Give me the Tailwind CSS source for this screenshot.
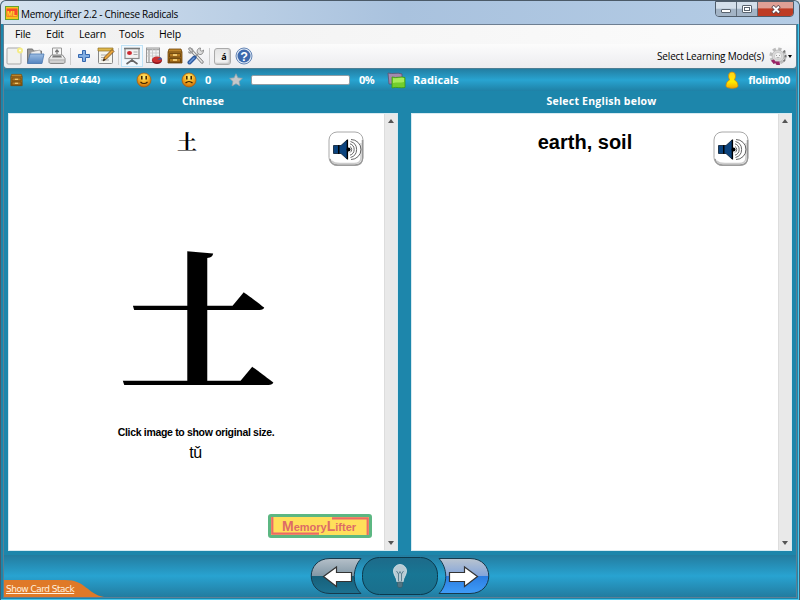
<!DOCTYPE html>
<html lang="en">
<head>
<meta charset="utf-8">
<title>MemoryLifter 2.2 - Chinese Radicals</title>
<script src="https://cdn.jsdelivr.net/npm/@tailwindcss/browser@4"></script>
</head>
<body class="w-[800px] h-[600px] overflow-hidden bg-[#dfe6ee] font-['Open_Sans','Noto_Sans',sans-serif] text-black">
<svg width="0" height="0" class="absolute">
<defs>
<linearGradient id="wood" x2="0" y2="1"><stop stop-color="#c48a2c"/><stop offset="1" stop-color="#8a5710"/></linearGradient>
<radialGradient id="face" cx=".5" cy=".3" r=".7"><stop stop-color="#fff27a"/><stop offset=".5" stop-color="#f5b024"/><stop offset="1" stop-color="#c96a08"/></radialGradient>
<linearGradient id="gray" x2="0" y2="1"><stop stop-color="#fff"/><stop offset="1" stop-color="#c4c4c4"/></linearGradient>
<linearGradient id="btnL" x2="0" y2="1"><stop stop-color="#b5c0c9"/><stop offset=".49" stop-color="#8298a6"/><stop offset=".5" stop-color="#17607a"/><stop offset="1" stop-color="#1c7190"/></linearGradient>
<linearGradient id="btnR" x2="0" y2="1"><stop stop-color="#bac4cf"/><stop offset=".49" stop-color="#84a5da"/><stop offset=".5" stop-color="#2b7ce0"/><stop offset="1" stop-color="#3f9cf8"/></linearGradient>
<linearGradient id="btnM" x2="0" y2="1"><stop stop-color="#1d6a89"/><stop offset=".45" stop-color="#187694"/><stop offset="1" stop-color="#1a6f8c"/></linearGradient>
<linearGradient id="gold" x2="0" y2="1"><stop stop-color="#ffd21a"/><stop offset=".6" stop-color="#ffee00"/><stop offset="1" stop-color="#f5a800"/></linearGradient>
<linearGradient id="fold" x2="0" y2="1"><stop stop-color="#9dbde2"/><stop offset="1" stop-color="#5484c0"/></linearGradient>
<symbol id="drawer" viewBox="0 0 16 16"><path d="M2 1h12l1 3v11H1V4z" fill="url(#wood)" stroke="#70450a" stroke-width=".8"/><path d="M1 4h14M2.500 5.500h11v3.500h-11zM2.500 10.500h11V14h-11z" fill="#b47a20" stroke="#65400c" stroke-width=".8"/><path d="M6 7h4M6 12h4" stroke="#ffe08a" stroke-width="1.300"/></symbol>
<symbol id="speaker" viewBox="0 0 36 36"><rect x="1" y="1" width="34" height="33.500" rx="8" fill="#fff" stroke="#a8a8a8"/><path d="M2 28c1 4.500 3 6 8 6h17c5 0 7.500-2 7.500-7V9" fill="none" stroke="#999" stroke-width="1.500"/><path d="M4 30c2 2.500 4 2.500 8 2.500h14c5 0 7-2 7-6V12" fill="none" stroke="#ccc" stroke-width="1.500"/><path d="M5.500 14.500h5v8h-5zM11 14.500h2l6-5.500v19l-6-5.500h-2z" fill="#0b437e" stroke="#061a30" stroke-width=".8"/><path d="M10.700 14v9M19.500 8.500v20" stroke="#000" stroke-width="1.200"/><circle cx="20.500" cy="18.500" r="2" fill="#000"/><path d="M22 15.500a3.500 3.500 0 0 1 0 6M22 12.800a6 6 0 0 1 0 11.400M22.500 10.500a8.300 8.300 0 0 1 0 16M23 8.500a10 10 0 0 1 0 20" fill="none" stroke="#555" stroke-width=".9"/></symbol>
</defs>
</svg>
<div class="w-[800px] h-[600px] flex flex-col rounded-t-md border-x border-t border-[#4b5a68] bg-[#1d86ab] relative overflow-hidden shadow-[inset_-1px_-1px_0_#49c8ee]">
  <header class="h-[23px] shrink-0 flex items-center bg-linear-to-r from-[#d5e2ef] via-[#a9c2de] to-[#b4cce5] pl-1 pt-[2px]">
    <svg class="w-[14px] h-[14px] mr-[2px] -mt-px" viewBox="0 0 14 14"><rect x=".5" y=".5" width="13" height="13" fill="#f5c51c" stroke="#62a232"/><rect x="1.500" y="2.500" width="11" height="8" fill="#f6492c"/><text x="2" y="9.500" font-size="7.500" font-weight="bold" fill="#ffe52c" font-family="Liberation Sans" textLength="10" lengthAdjust="spacingAndGlyphs">ML</text></svg>
    <span class="text-[10px] tracking-[-0.260px] whitespace-nowrap mt-[2px]">MemoryLifter 2.2 - Chinese Radicals</span>
    <div class="ml-auto mr-[5px] self-start -mt-[2px] flex h-[16px] w-[79px] rounded-b-[4px] border border-[#4f5d6b] overflow-hidden">
      <div class="w-[21px] border-r border-[#5f6d7b] bg-linear-to-b from-[#d4dfea] from-45% to-[#a3b4c6] to-50% flex justify-center items-end pb-[3px]"><div class="w-[10px] h-[4px] bg-white border border-[#59636e] rounded-[1px]"></div></div>
      <div class="w-[21px] border-r border-[#5f6d7b] bg-linear-to-b from-[#d4dfea] from-45% to-[#a3b4c6] to-50% flex justify-center items-center"><div class="w-[10px] h-[8px] bg-white border border-[#59636e] rounded-[1px] p-[1px]"><div class="w-full h-full border border-[#59636e]"></div></div></div>
      <div class="flex-1 bg-linear-to-b from-[#dfa095] from-40% to-[#bd3c25] to-50% flex justify-center items-center"><svg class="w-[10px] h-[9px]" viewBox="0 0 10 9"><path d="M1.500 1l7 7M8.500 1l-7 7" stroke="#53444c" stroke-width="3.400"/><path d="M2 1.500l6 6M8 1.500l-6 6" stroke="#fff" stroke-width="2"/></svg></div>
    </div>
  </header>
  <div class="flex-1 flex flex-col mx-[2px] mb-[2px] border-x border-b border-[#5d7f94] border-t border-t-[#6e7f92]">
    <nav class="h-[19px] bg-linear-to-r from-[#f0f0f0] to-[#fcfcfc] flex items-center text-[10.500px] tracking-[-0.200px] shrink-0">
      <span class="w-[31px] ml-[11px]">File</span><span class="w-[33px]">Edit</span><span class="w-[40px]">Learn</span><span class="w-[40px]">Tools</span><span>Help</span>
    </nav>
    <div class="h-[24px] shrink-0 bg-linear-to-b from-[#fcfcfc] to-[#ececef] rounded-b-[3px] flex items-center pl-[2px]">
      <svg class="w-[17px] h-[18px] mr-[3px]" viewBox="0 0 17 18"><rect x="1" y="1" width="14" height="16" rx="1" fill="#f1f1ee" stroke="#a7a7a7"/><circle cx="14" cy="3.500" r="3" fill="#f5ec87"/><circle cx="14" cy="3.500" r="1" fill="#fff"/></svg>
      <svg class="w-[19px] h-[18px] mr-[3px]" viewBox="0 0 19 18"><path d="M1.500 16V2h5l1 2h8v12z" fill="#999" stroke="#777"/><path d="M5 5l9-2 2 7H4z" fill="#eee" stroke="#999" stroke-width=".6"/><path d="M4 7h14l-2 9.500H1.500z" fill="url(#fold)" stroke="#4a79b3" stroke-width=".8"/></svg>
      <svg class="w-[18px] h-[18px] mr-[4px]" viewBox="0 0 18 18"><path d="M4.500 9V1h9v8" fill="#f6f6f6" stroke="#999"/><path d="M9 7V3.500M7.300 5L9 3l1.700 2" fill="none" stroke="#777" stroke-width="1.200"/><path d="M3.500 8h11l2.500 3.500v3.500c0 1-1 1.500-2 1.500H3c-1 0-2-.5-2-1.500v-3.500z" fill="url(#gray)" stroke="#888"/><path d="M4 10.500h10l-1-2H5z" fill="#777"/><path d="M2 13h14" stroke="#aaa"/></svg>
      <div class="w-px h-[17px] bg-[#ccc] mr-[6px]"></div>
      <svg class="w-[14px] h-[14px] mr-[6px]" viewBox="0 0 14 14"><path d="M5.500 1.500h3v4h4v3h-4v4h-3v-4h-4v-3h4z" fill="#82aee3" stroke="#3567ae"/></svg>
      <svg class="w-[18px] h-[18px] mr-[3px]" viewBox="0 0 18 18"><rect x="1.500" y="1.500" width="14" height="15" rx="1" fill="#f5f5ee" stroke="#888"/><path d="M1 1h15v3H1z" fill="#dfb74a" stroke="#8c6d22" stroke-width=".7"/><path d="M4 8h7M4 10.500h5M4 13h8" stroke="#aaa"/><path d="M6 14l1.500-4L15 2.500l2 2L9.500 12z" fill="#e7a43b" stroke="#69441a" stroke-width=".8"/><path d="M6 14l1-2.500 1.500 1.500z" fill="#222"/></svg>
      <div class="w-px h-[17px] bg-[#ccc] mr-[2px]"></div>
      <div class="w-[22px] h-[22px] border border-[#bfe2f6] bg-[#f0f8fd] flex items-center justify-center mr-[2px]">
        <svg class="w-[18px] h-[18px]" viewBox="0 0 18 18"><rect x="2" y="1.500" width="14" height="10" fill="#f2f2f2" stroke="#8a8a8a" stroke-width="1.200"/><path d="M1 1.500h16" stroke="#777" stroke-width="1.500"/><ellipse cx="6.500" cy="6" rx="2.500" ry="2" fill="#cd2931"/><path d="M10.500 5h4M10.500 7.500h4" stroke="#aaa"/><path d="M9 12v2M3.500 17L9 13l5.500 4" fill="none" stroke="#666" stroke-width="1.600"/></svg>
      </div>
      <svg class="w-[18px] h-[18px] mr-[4px]" viewBox="0 0 18 18"><rect x="1.500" y="1" width="13" height="14.500" fill="#f4f4f4" stroke="#999"/><path d="M2 2.500h12M4 2v13" stroke="#aaa" stroke-width="1.500"/><path d="M7.500 2v10M11 2v10M2 6h12M2 9h12" stroke="#c5c5c5" stroke-width=".8"/><ellipse cx="12" cy="13.500" rx="5" ry="3.500" fill="#8c1118"/><ellipse cx="12" cy="12.500" rx="5" ry="3" fill="#cb3030"/><path d="M12 12.500l4-2.300 1 2.300z" fill="#315fa8"/></svg>
      <svg class="w-[16px] h-[18px] mr-[4px]"><use href="#drawer"/></svg>
      <svg class="w-[18px] h-[18px] mr-[4px]" viewBox="0 0 18 18"><path d="M3 2l12 13" stroke="#777" stroke-width="3.200" stroke-linecap="round"/><path d="M3 2l12 13" stroke="#e5e5e5" stroke-width="1.700" stroke-linecap="round"/><path d="M1.500 4.500c1 2.500 4 1.500 4-1 0-1-1-2-2-2" fill="none" stroke="#999" stroke-width="1.500"/><path d="M16.500 3c-2 2-4 1-3-2-3 0-4 3-3 5l2 1.500c2 .5 4-1 4-4.500z" fill="#ddd" stroke="#777" stroke-width=".8"/><path d="M11 7l-4 4" stroke="#999" stroke-width="2"/><path d="M7.500 10.500L2.500 15.500" stroke="#2f5ca1" stroke-width="4" stroke-linecap="round"/><path d="M7 11l-4.500 4.500" stroke="#6e9ad9" stroke-width="1.500" stroke-linecap="round"/></svg>
      <div class="w-px h-[17px] bg-[#ccc] mr-[4px]"></div>
      <div class="w-[17px] h-[17px] rounded-[3px] border border-[#aaa] bg-linear-to-b from-[#e4e4e4] to-[#f6f6f6] shadow-[inset_-1px_-1px_2px_#bbb] text-[9px] leading-[16px] font-bold text-center pl-[3px] mr-[4px]">á</div>
      <svg class="w-[18px] h-[18px]" viewBox="0 0 18 18"><circle cx="9" cy="9" r="8" fill="#dfe9f5" stroke="#6787b6"/><circle cx="9" cy="9" r="6.500" fill="#3c69ad"/><text x="5.300" y="13.500" font-size="12.500" font-weight="bold" fill="#fff" font-family="Liberation Sans">?</text></svg>
      <span class="ml-auto text-[10px] tracking-[-0.170px] mr-[5px] whitespace-nowrap">Select Learning Mode(s)</span>
      <svg class="w-[18px] h-[19px]" viewBox="0 0 18 19"><circle cx="9" cy="9" r="7" fill="none" stroke="#bcbcbc" stroke-width="3.200" stroke-dasharray="3.200 2.300"/><path d="M14.500 4l1.500 1M15.500 9h2M14.500 13l1.500 1" stroke="#777" stroke-width="2.600"/><circle cx="9" cy="9" r="6" fill="#d9d9d9" stroke="#aaa" stroke-width=".6"/><circle cx="9" cy="9" r="3.600" fill="#f3f3f3" stroke="#bbb" stroke-width=".6"/><path d="M7.500 8v1M10.500 8v1M7.500 10.800h3" stroke="#888" stroke-width=".8"/><path d="M2 13.500l3-1 1.500 2h4l.5 3.500H7.500l-1-2-2 1z" fill="#9a2467"/></svg>
      <div class="border-x-[2.500px] border-x-transparent border-t-[3px] border-t-black ml-px mr-[4px]"></div>
    </div>
    <div class="h-[23px] shrink-0 flex items-center bg-linear-to-b from-[#237ea2] via-[#28a4d1] to-[#1f81a6] text-white font-bold border-t border-[#4c7e94] pl-[6px] text-[10px]">
      <svg class="w-[13px] h-[14px] mr-[8px]"><use href="#drawer"/></svg>
      <span class="w-[28px] pt-[2px] text-[9px] font-['DejaVu_Sans'] tracking-[-0.400px]">Pool</span><span class="w-[77px] pt-[2px] text-[9px] font-['DejaVu_Sans'] tracking-[-0.900px] whitespace-nowrap">(1 of 444)</span>
      <svg class="w-[16px] h-[16px] mr-[8px]" viewBox="0 0 16 16"><circle cx="8" cy="8" r="7" fill="url(#face)" stroke="#a65a0d" stroke-width=".7"/><path d="M5.800 4v3.500M10.200 4v3.500" stroke="#3b2103" stroke-width="1.500"/><path d="M4.500 10c2 2 5 2 7 0" fill="none" stroke="#3b2103" stroke-width="1.200"/></svg>
      <span class="w-[21px] text-[11px]">0</span>
      <svg class="w-[16px] h-[16px] mr-[8px]" viewBox="0 0 16 16"><circle cx="8" cy="8" r="7" fill="url(#face)" stroke="#a65a0d" stroke-width=".7"/><path d="M5.800 4v3.500M10.200 4v3.500" stroke="#3b2103" stroke-width="1.500"/><path d="M4.500 11c2-2 5-2 7 0" fill="none" stroke="#3b2103" stroke-width="1.200"/></svg>
      <span class="w-[24px] text-[11px]">0</span>
      <svg class="w-[14px] h-[14px] mr-[8px]" viewBox="0 0 14 14"><path d="M7 .7l1.900 4.100 4.500.5-3.300 3.100.9 4.500-4-2.200-4 2.200.9-4.500L.6 5.300l4.500-.5z" fill="#c5c8ca" stroke="#8e9fa8" stroke-width=".7"/></svg>
      <div class="w-[99px] h-[10px] bg-white border border-[#8f9ea6] rounded-[2px]"></div>
      <span class="w-[28px] ml-[9px] text-[11px] tracking-[-0.600px]">0%</span>
      <svg class="w-[19px] h-[17px] mr-[7px]" viewBox="0 0 19 17"><path d="M1 1c5 1.500 9-1 14 1v10H2z" fill="#a58aae" stroke="#5e526f" stroke-width=".8"/><path d="M5 5c5 1.500 8-1 13 .5v10c-5 1-8-1-13 .5z" fill="#73cf2d" stroke="#3b9912" stroke-width=".8"/><path d="M6 6c4 1 7-1 11 0v4c-4 1-7 0-11 1z" fill="#a5ec5a"/></svg>
      <span class="text-[11px] tracking-[0.050px]">Radicals</span>
      <svg class="w-[14px] h-[18px] ml-auto mr-[9px]" viewBox="0 0 14 18"><path d="M3.500 5a3.500 4 0 0 1 7 0c0 2-1 3-1 4 2 1 3.500 3 3.500 6 0 3-12 3-12 0 0-3 1.500-5 3.500-6 0-1-1-2-1-4z" fill="url(#gold)" stroke="#d18a0a" stroke-width=".8"/></svg>
      <span class="text-[11px] tracking-[-0.350px] mr-[6px]">flolim00</span>
    </div>
    <main class="flex-1 flex min-h-0 px-[4px] gap-[13px]">
      <section class="w-[390px] flex flex-col">
        <h2 class="h-[22px] leading-[21px] text-center text-white font-bold text-[10.500px] tracking-[0.100px]">Chinese</h2>
        <div class="h-[438px] bg-white border border-[#d7eaf1] flex">
          <div class="flex-1 relative flex flex-col items-center pr-[15px]">
            <p class="mt-[15px] ml-[-4px] text-[20px] leading-[26px] font-['Noto_Serif_CJK_SC','Noto_Sans_CJK_SC',sans-serif] font-bold">土</p>
            <svg class="absolute right-[20px] top-[17px] w-[36px] h-[36px]"><use href="#speaker"/></svg>
            <p class="h-[180px] mt-[69px] ml-[18px] text-[160px] leading-[180px] scale-y-[0.94] font-['Noto_Serif_CJK_SC','Noto_Sans_CJK_SC',sans-serif] font-bold">土</p>
            <p class="mt-[21px] ml-[14px] font-['Liberation_Sans',sans-serif] font-bold text-[10.500px] leading-[14px] tracking-[-0.320px] whitespace-nowrap">Click image to show original size.</p>
            <p class="mt-[5px] ml-[13px] font-['Liberation_Sans',sans-serif] text-[16px] leading-[18px] tracking-[-0.300px]">tǔ</p>
            <div class="absolute left-[259px] top-[400px] w-[104px] h-[24px] rounded-[3px] border-[3px] border-[#5cb782] bg-[#ffdf5a]">
              <svg class="w-[98px] h-[18px] block" viewBox="0 0 98 18"><path d="M1.300 0v16.700H48M61 1.300h35.700V18" fill="none" stroke="#ea6a67" stroke-width="2.200"/><text y="14" fill="#dd6b67" font-family="Liberation Sans" font-weight="bold"><tspan x="11" font-size="14">M</tspan><tspan font-size="11">emory</tspan><tspan font-size="14">L</tspan><tspan font-size="11">ifter</tspan></text></svg>
            </div>
          </div>
          <div class="w-[13px] bg-[#e9e9e9] border-l border-[#ddd] flex flex-col justify-between items-center py-[5px]"><i class="border-x-[3px] border-x-transparent border-b-[4px] border-b-[#555]"></i><i class="border-x-[3px] border-x-transparent border-t-[4px] border-t-[#555]"></i></div>
        </div>
      </section>
      <section class="w-[381px] flex flex-col">
        <h2 class="h-[22px] leading-[21px] text-center text-white font-bold text-[10.500px] tracking-[0.220px]">Select English below</h2>
        <div class="h-[438px] bg-white border border-[#d7eaf1] flex">
          <div class="flex-1 relative flex flex-col items-center pr-[20px]">
            <p class="mt-[15px] font-['Liberation_Sans',sans-serif] font-bold text-[20px] leading-[26px]">earth, soil</p>
            <svg class="absolute right-[29px] top-[17px] w-[36px] h-[36px]"><use href="#speaker"/></svg>
          </div>
          <div class="w-[13px] bg-[#e9e9e9] border-l border-[#ddd] flex flex-col justify-between items-center py-[5px]"><i class="border-x-[3px] border-x-transparent border-b-[4px] border-b-[#555]"></i><i class="border-x-[3px] border-x-transparent border-t-[4px] border-t-[#555]"></i></div>
        </div>
      </section>
    </main>
    <footer class="h-[42px] shrink-0 bg-linear-to-b from-[#237c9f] via-[#28a3d1] to-[#227ca0] flex justify-between items-end relative">
      <div class="w-[106px] h-[17px] relative">
        <svg class="absolute inset-0 w-[106px] h-[17px]" viewBox="0 0 106 17"><path d="M0 0h61c21 0 22 14 39 17H0z" fill="#df7928"/></svg>
        <a class="relative block pl-[2px] leading-[19px] text-[9px] tracking-[-0.520px] underline text-[#fff0df] whitespace-nowrap font-['DejaVu_Sans']">Show Card Stack</a>
      </div>
      <svg class="absolute left-[306px] top-[2px] w-[182px] h-[40px]" viewBox="0 0 182 40">
        <path d="M20 1.500h31c-9 10-9 27 0 35H20c-25 0-25-35 0-35z" fill="url(#btnL)" stroke="#17394c"/>
        <path d="M129 1.500h31c25 0 25 35 0 35h-31c9-9 9-25 0-35z" fill="url(#btnR)" stroke="#17394c"/>
        <rect x="52.500" y=".5" width="75" height="37" rx="17" fill="url(#btnM)" stroke="#0c394c"/>
        <path d="M13.500 19.500l13-9.500v5.500h15v9h-15v5z" fill="#fff" stroke="#333" stroke-width="1.200"/>
        <path d="M167.500 19.500l-13-9.500v5.500h-15v9h15v5z" fill="#fff" stroke="#333" stroke-width="1.200"/>
        <path d="M83.500 14a6.500 6.500 0 0 1 13 0c0 4-3 6-3.500 11h-6c-.5-5-3.500-7-3.500-11z" fill="#b9cbd4" stroke="#dce7eb" stroke-width=".8"/><path d="M86.500 14l2 3 1.500-2.500 1.500 2.500 2-3M88.500 17v7M91.500 17v7" fill="none" stroke="#5e8291" stroke-width="1"/><path d="M87.500 25h5v4l-1 1.500h-3l-1-1.500z" fill="#527583" stroke="#385e6d" stroke-width=".7"/>
      </svg>
    </footer>
  </div>
</div>
</body>
</html>
